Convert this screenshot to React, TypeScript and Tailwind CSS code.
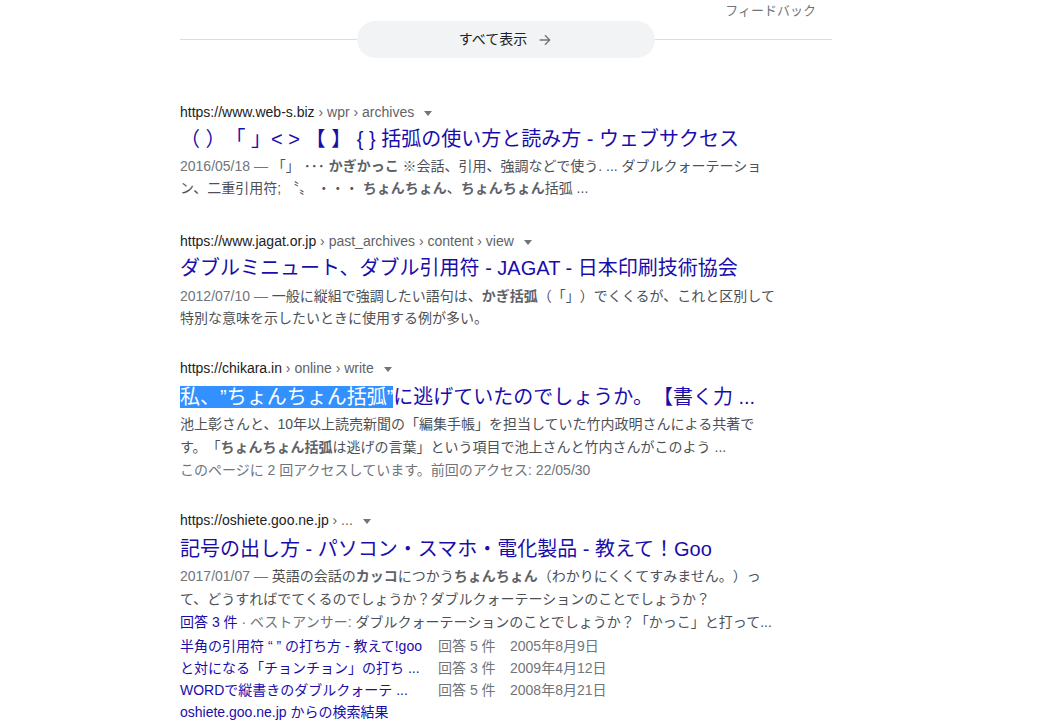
import React from "react";

const font = { fontFamily: '"Liberation Sans", Arial, "Noto Sans CJK JP", sans-serif' };

function Caret() {
  return (
    <svg width="10" height="10" viewBox="0 0 10 10" className="ml-[9px] inline-block align-[-1px]">
      <path d="M1 3 L9 3 L5 8 Z" fill="#70757a" />
    </svg>
  );
}

function Url({ host, path }: { host: string; path: string }) {
  return (
    <div className="whitespace-pre text-[14px] leading-[20px] text-[#202124]">
      <span>{host}</span>
      <span className="text-[#5f6368]">{path}</span>
      <Caret />
    </div>
  );
}

export default function App() {
  return (
    <div className="min-h-[728px] w-[1037px] bg-white [text-spacing-trim:space-all]" style={font}>
      <div className="ml-[180px] w-[652px]">
        <div className="flex justify-end pr-[16px] pt-[2px] text-[13px] leading-[18px] text-[#70757a]">
          フィードバック
        </div>
        <div className="relative mt-[1px] flex h-[37px] items-center justify-center">
          <div className="absolute left-0 right-0 top-[18px] h-px bg-[#dadce0]" />
          <div className="relative flex h-[37px] w-[298px] items-center justify-center rounded-full bg-[#f1f3f4] text-[14px] text-[#202124]">
            <span>すべて表示</span>
            <svg width="16" height="16" viewBox="0 0 24 24" className="ml-[10px]">
              <path d="M4 12h14M12 5l7 7-7 7" stroke="#70757a" strokeWidth="2" fill="none" />
            </svg>
          </div>
        </div>

        <div className="mt-[44px] flex flex-col">
          {/* Result 1 */}
          <div>
            <Url host="https://www.web-s.biz" path=" › wpr › archives" />
            <div className="mt-[4px] text-[20px] leading-[26px] text-[#1a0dab]">
              （ ）「 」&lt; &gt; 【 】 {"{ }"} 括弧の使い方と読み方 - ウェブサクセス
            </div>
            <div className="mt-[3px] text-[14px] leading-[22px] text-[#4d5156]">
              <span className="text-[#70757a]">2016/05/18 — </span>「」 ･･･ <b className="text-[#5f6368]">かぎかっこ</b> ※会話、引用、強調などで使う. ... ダブルクォーテーショ
              <br />
              ン、二重引用符; 〝〟 ・・・ <b className="text-[#5f6368]">ちょんちょん</b>、<b className="text-[#5f6368]">ちょんちょん</b>括弧 ...
            </div>
          </div>

          {/* Result 2 */}
          <div className="mt-[32px]">
            <Url host="https://www.jagat.or.jp" path=" › past_archives › content › view" />
            <div className="mt-[4px] text-[20px] leading-[26px] text-[#1a0dab]">
              ダブルミニュート、ダブル引用符 - JAGAT - 日本印刷技術協会
            </div>
            <div className="mt-[4px] text-[14px] leading-[22px] text-[#4d5156]">
              <span className="text-[#70757a]">2012/07/10 — </span>一般に縦組で強調したい語句は、<b className="text-[#5f6368]">かぎ括弧</b>（「」）でくくるが、これと区別して
              <br />
              特別な意味を示したいときに使用する例が多い。
            </div>
          </div>

          {/* Result 3 */}
          <div className="mt-[29px]">
            <Url host="https://chikara.in" path=" › online › write" />
            <div className="mt-[6px] text-[20px] leading-[26px] text-[#1a0dab]">
              <span className="bg-[#3390ff] text-white">私、”ちょんちょん括弧”</span>に逃げていたのでしょうか。【書く力 ...
            </div>
            <div className="mt-[3px] text-[14px] leading-[23px] text-[#4d5156]">
              池上彰さんと、10年以上読売新聞の「編集手帳」を担当していた竹内政明さんによる共著で
              <br />
              す。「<b className="text-[#5f6368]">ちょんちょん括弧</b>は逃げの言葉」という項目で池上さんと竹内さんがこのよう ...
              <br />
              <span className="text-[#70757a]">このページに 2 回アクセスしています。前回のアクセス: 22/05/30</span>
            </div>
          </div>

          {/* Result 4 */}
          <div className="mt-[28px]">
            <Url host="https://oshiete.goo.ne.jp" path=" › ..." />
            <div className="mt-[6px] text-[20px] leading-[26px] text-[#1a0dab]">
              記号の出し方 - パソコン・スマホ・電化製品 - 教えて！Goo
            </div>
            <div className="mt-[3px] text-[14px] leading-[23px] text-[#4d5156]">
              <span className="text-[#70757a]">2017/01/07 — </span>英語の会話の<b className="text-[#5f6368]">カッコ</b>につかう<b className="text-[#5f6368]">ちょんちょん</b>（わかりにくくてすみません。）っ
              <br />
              て、どうすればでてくるのでしょうか？ダブルクォーテーションのことでしょうか？
              <br />
              <span className="text-[#1a0dab]">回答 3 件</span>
              <span className="text-[#70757a]"> · ベストアンサー: </span>ダブルクォーテーションのことでしょうか？「かっこ」と打って...
            </div>
            <div className="mt-[1px] text-[14px] leading-[22px]">
              {[
                ["半角の引用符 “ ” の打ち方 - 教えて!goo", "回答 5 件", "2005年8月9日"],
                ["と対になる「チョンチョン」の打ち ...", "回答 3 件", "2009年4月12日"],
                ["WORDで縦書きのダブルクォーテ ...", "回答 5 件", "2008年8月21日"],
              ].map(([t, a, d]) => (
                <div key={t} className="flex">
                  <span className="w-[258px] text-[#1a0dab]">{t}</span>
                  <span className="w-[72px] text-[#70757a]">{a}</span>
                  <span className="text-[#70757a]">{d}</span>
                </div>
              ))}
              <div className="text-[#1a0dab]">oshiete.goo.ne.jp からの検索結果</div>
            </div>
          </div>
        </div>
      </div>
    </div>
  );
}
